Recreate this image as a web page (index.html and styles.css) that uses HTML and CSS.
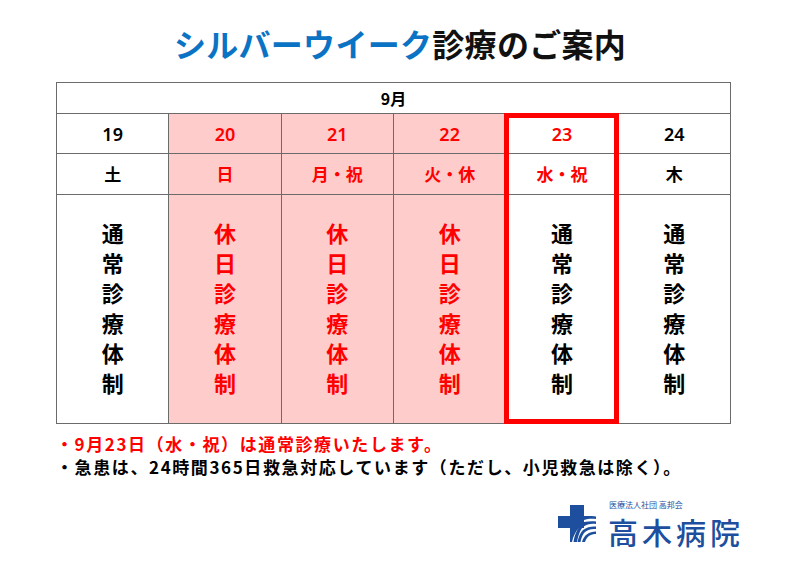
FILE: index.html
```html
<!DOCTYPE html>
<html lang="ja">
<head>
<meta charset="utf-8">
<link rel="stylesheet" href="styles.css">
</head>
<body>
<div class="page">
  <h1 class="title"><span class="blue">シルバーウイーク</span>診療のご案内</h1>
  <div class="table-wrap">
    <table class="cal">
      <tr class="r-month"><td colspan="6">9月</td></tr>
      <tr class="r-date">
        <td>19</td><td class="hol">20</td><td class="hol">21</td><td class="hol">22</td><td class="red">23</td><td>24</td>
      </tr>
      <tr class="r-day">
        <td>土</td><td class="hol">日</td><td class="hol">月・祝</td><td class="hol">火・休</td><td class="red">水・祝</td><td>木</td>
      </tr>
      <tr class="r-body">
        <td><div class="vt">通<br>常<br>診<br>療<br>体<br>制</div></td>
        <td class="hol"><div class="vt">休<br>日<br>診<br>療<br>体<br>制</div></td>
        <td class="hol"><div class="vt">休<br>日<br>診<br>療<br>体<br>制</div></td>
        <td class="hol"><div class="vt">休<br>日<br>診<br>療<br>体<br>制</div></td>
        <td><div class="vt">通<br>常<br>診<br>療<br>体<br>制</div></td>
        <td><div class="vt">通<br>常<br>診<br>療<br>体<br>制</div></td>
      </tr>
    </table>
    <div class="highlight"></div>
  </div>
  <div class="notes">
    <p class="note red">・9月23日（水・祝）は通常診療いたします。</p>
    <p class="note">・急患は、24時間365日救急対応しています（ただし、小児救急は除く）。</p>
  </div>
  <div class="footer">
    <div class="logo">
      <svg class="mark" width="42" height="40" viewBox="0 0 42 40">
        <rect x="14" y="1" width="14" height="23" fill="#1d4f9e"/>
        <rect x="2" y="12" width="26" height="12" fill="#1d4f9e"/>
        <path d="M28 12 C34 12 38 12 40 12.5 L40 15 C36 14.5 32 14.5 28 16 Z" fill="#1d4f9e"/>
        <path d="M28 18 C33 17 37 17 40 17.5 L40 20 C35 19.5 31 20 27 23 C24 26 22 32 21 38 L17.5 38 C18.5 31 21 24 28 18 Z" fill="#1d4f9e"/>
        <path d="M40 22.5 L40 25 C35 24.5 31 26 28 29 C26 32 25 35 24.5 38 L21.5 38 C22.5 33 24 29 27 26 C31 23 36 22 40 22.5 Z" fill="#1d4f9e"/>
        <path d="M14 24 L23 24 C20 27 17 32 16 38 L14 38 Z" fill="#1d4f9e"/>
        <path d="M40 27.5 L40 30 C35 30 31 32 29 38 L26 38 C28 31 33 27.5 40 27.5 Z" fill="#1d4f9e"/>
      </svg>
      <div class="logo-text">
        <div class="corp">医療法人社団 高邦会</div>
        <div class="name">高木病院</div>
      </div>
    </div>
  </div>
</div>
</body>
</html>
```

FILE: styles.css
```css
html, body {
  margin: 0;
  padding: 0;
  background: #ffffff;
}
body {
  font-family: "Noto Sans CJK JP", "Noto Sans", sans-serif;
  color: #000;
}
.page {
  width: 800px;
  height: 566px;
  position: relative;
  overflow: hidden;
}
.title {
  margin: 0;
  padding-top: 23px;
  height: 40px;
  line-height: 40px;
  font-size: 32px;
  font-weight: 700;
  text-align: center;
  letter-spacing: 0.3px;
  color: #111;
}
.blue {
  color: #0b73c4;
}
.table-wrap {
  position: relative;
  margin: 19px 0 0 56px;
  width: 675px;
}
.cal {
  border-collapse: collapse;
  table-layout: fixed;
  width: 675px;
}
.cal td {
  border: 1px solid #6b6b6b;
  padding: 0;
  text-align: center;
  vertical-align: middle;
  font-weight: 700;
}
.r-month td {
  height: 30px;
  font-size: 16px;
  line-height: 20px;
}
.r-date td {
  height: 39px;
  font-size: 18px;
  line-height: 22px;
  font-family: "Noto Sans", "Noto Sans CJK JP", sans-serif;
  font-weight: 600;
}
.r-day td {
  height: 40px;
  font-size: 17px;
  line-height: 22px;
}
.r-body td {
  height: 228px;
}
.cal td.hol {
  background: #ffcccc;
  color: #ff0000;
}
.cal td.red {
  color: #ff0000;
}
.vt {
  font-size: 22px;
  line-height: 30px;
  margin-top: -4px;
}
.highlight {
  position: absolute;
  left: 448px;
  top: 31px;
  width: 105px;
  height: 301px;
  border: 5px solid #ff0000;
}
.notes {
  margin: 8px 0 0 56px;
}
.note {
  margin: 0;
  font-size: 17px;
  line-height: 23px;
  font-weight: 700;
  letter-spacing: 1.6px;
  white-space: nowrap;
}
.note.red {
  color: #ff0000;
}
.footer {
  display: flex;
  justify-content: flex-end;
  padding-right: 56px;
  margin-top: 22px;
}
.logo {
  display: flex;
  align-items: flex-start;
  gap: 10px;
}
.mark {
  display: block;
  margin-top: 4px;
}
.logo-text {
  color: #1d4f9e;
}
.corp {
  font-size: 8px;
  line-height: 10px;
  padding-left: 1px;
  margin-bottom: 6px;
}
.name {
  font-size: 30px;
  line-height: 30px;
  font-weight: 500;
  letter-spacing: 4px;
}
```
